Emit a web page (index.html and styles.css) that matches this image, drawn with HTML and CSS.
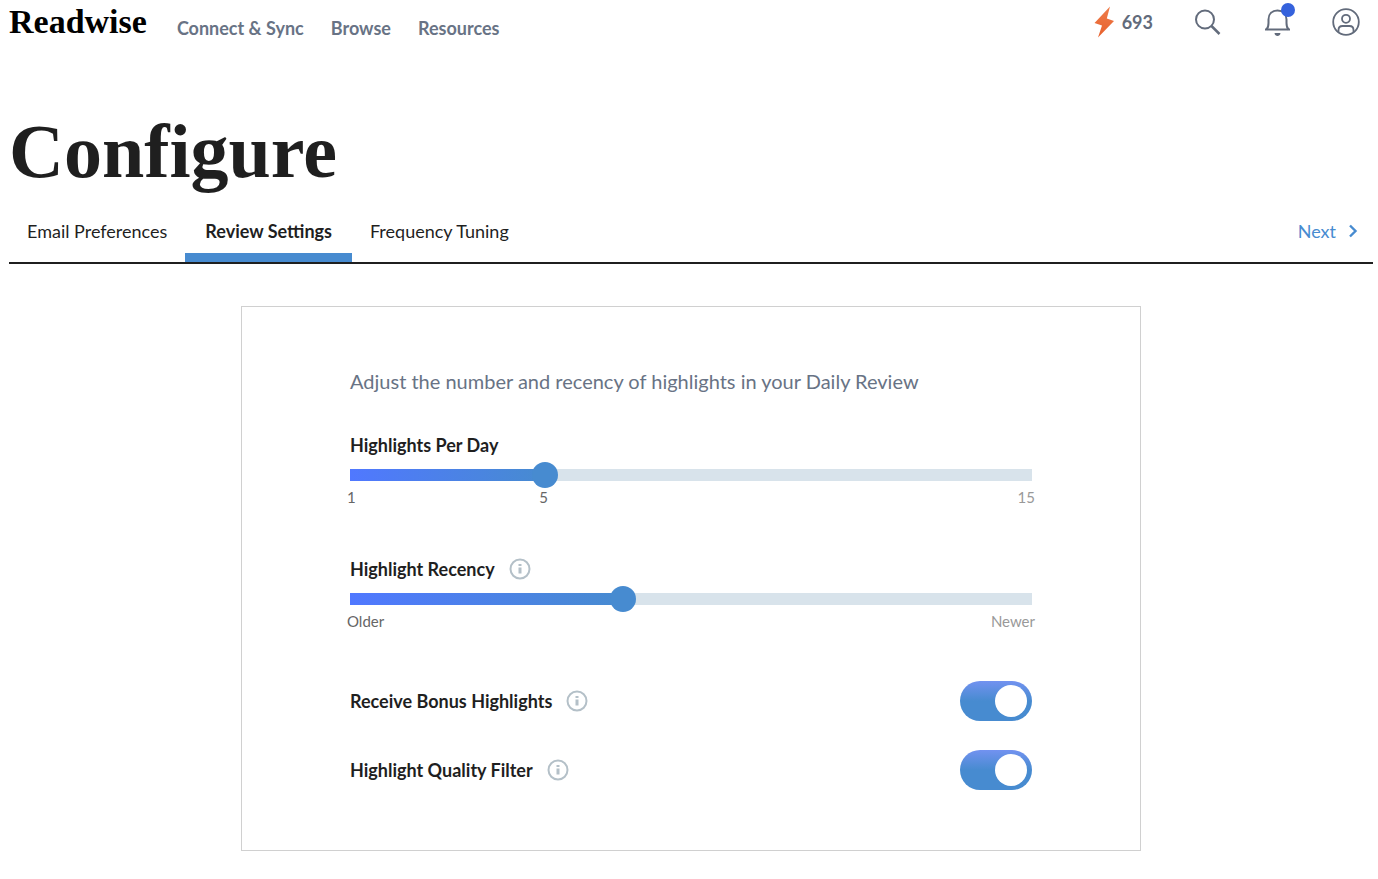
FILE: index.html
```html
<!DOCTYPE html>
<html lang="en">
<head>
    <meta charset="UTF-8">
    <meta name="viewport" content="width=device-width, initial-scale=1.0">
    <title>Readwise - Configure</title>
    <link rel="stylesheet" href="styles.css">
</head>
<body>
    <!-- Top Navigation -->
    <header class="topbar">
        <a class="logo" href="#">Readwise</a>
        <nav class="main-nav">
            <a href="#">Connect &amp; Sync</a>
            <a href="#">Browse</a>
            <a href="#">Resources</a>
        </nav>
        <div class="actions">
            <a class="streak" href="#">
                <svg width="20" height="32" viewBox="0 0 20 32">
                    <defs>
                        <linearGradient id="bolt" x1="0" y1="0" x2="0" y2="1">
                            <stop offset="0" stop-color="#ee7d4b" />
                            <stop offset="1" stop-color="#e8602c" />
                        </linearGradient>
                    </defs>
                    <path d="M16 0.500 L0.500 17 L8 19.500 L4 31.500 L20 15 L12.800 12.500 Z" fill="url(#bolt)" />
                </svg>
                <span>693</span>
            </a>
            <button class="icon-button" aria-label="Search">
                <svg width="28" height="28" viewBox="0 0 28 28" fill="none" stroke="#626b7b">
                    <circle cx="11" cy="11.500" r="9" stroke-width="2" />
                    <path d="M17.500 18 L25.500 26" stroke-width="2.500" />
                </svg>
            </button>
            <button class="icon-button" aria-label="Notifications">
                <svg width="28" height="28" viewBox="0 0 28 28" fill="none" stroke="#626b7b" stroke-width="2">
                    <path d="M2 21.500 H27" />
                    <path d="M3.500 21.500 C5.500 19.500 5.500 18 5.500 15 V11.500 C5.500 6 9 2.500 14.500 2.500 S23.500 6 23.500 11.500 V15 C23.500 18 23.500 19.500 25.500 21.500" />
                    <path d="M11.500 25 H17.500 C17.200 27.200 16 28 14.500 28 S11.800 27.200 11.500 25 Z" fill="#626b7b" stroke="none" />
                </svg>
                <span class="badge"></span>
            </button>
            <button class="icon-button" aria-label="Account">
                <svg width="28" height="28" viewBox="0 0 28 28" fill="none" stroke="#626b7b" stroke-width="1.800">
                    <circle cx="14" cy="14" r="12.800" />
                    <circle cx="14" cy="10.800" r="4" />
                    <path d="M6.500 24.200 V22 C6.500 19.300 8.200 18 10.500 18 H17.500 C19.800 18 21.500 19.300 21.500 22 V24.200" />
                </svg>
            </button>
        </div>
    </header>

    <h1>Configure</h1>

    <!-- Tabs -->
    <nav class="tabs">
        <a class="tab" href="#">Email Preferences</a>
        <a class="tab active" href="#">Review Settings</a>
        <a class="tab" href="#">Frequency Tuning</a>
        <a class="next" href="#">
            Next
            <svg width="10" height="14" viewBox="0 0 10 14" fill="none" stroke="#478bd0" stroke-width="2.400">
                <path d="M2 1.500 L7.500 7 L2 12.500" />
            </svg>
        </a>
    </nav>

    <!-- Review Settings -->
    <main class="card">
        <p class="intro">Adjust the number and recency of highlights in your Daily Review</p>

        <div class="setting">
            <div class="heading">
                <label for="perDay">Highlights Per Day</label>
            </div>
            <input class="slider" type="range" id="perDay" min="1" max="15" value="5" style="--fill: 0.2857" />
            <div class="scale">
                <span>1</span>
                <output class="current" for="perDay" style="left: 28.57%">5</output>
                <span class="end">15</span>
            </div>
        </div>

        <div class="setting">
            <div class="heading">
                <label for="recency">Highlight Recency</label>
                <svg class="info" viewBox="0 0 22 22"><circle cx="11" cy="11" r="9.500" /><path d="M11 9.500 V15.500 M11 6 V8" /></svg>
            </div>
            <input class="slider" type="range" id="recency" min="0" max="100" value="40" style="--fill: 0.4" />
            <div class="scale">
                <span>Older</span>
                <span class="end">Newer</span>
            </div>
        </div>

        <div class="toggle-row">
            <label for="bonus">Receive Bonus Highlights</label>
            <svg class="info" viewBox="0 0 22 22"><circle cx="11" cy="11" r="9.500" /><path d="M11 9.500 V15.500 M11 6 V8" /></svg>
            <input class="toggle" type="checkbox" id="bonus" checked />
        </div>

        <div class="toggle-row">
            <label for="quality">Highlight Quality Filter</label>
            <svg class="info" viewBox="0 0 22 22"><circle cx="11" cy="11" r="9.500" /><path d="M11 9.500 V15.500 M11 6 V8" /></svg>
            <input class="toggle" type="checkbox" id="quality" checked />
        </div>
    </main>

    <script>
        // Keep the filled part of each slider in step with its thumb
        document.querySelectorAll('.slider').forEach(function (slider) {
            slider.addEventListener('input', function () {
                const fill = (slider.value - slider.min) / (slider.max - slider.min);
                slider.style.setProperty('--fill', fill);
                const current = slider.parentElement.querySelector('.current');
                if (current) {
                    current.style.left = fill * 100 + '%';
                    current.textContent = slider.value;
                }
            });
        });
    </script>
</body>
</html>
```
FILE: styles.css
```css
* {
    box-sizing: border-box;
}
body {
    margin: 0;
    padding: 0 5px 24px 9px;
    font-family: Lato, "Liberation Sans", sans-serif;
    font-size: 18px;
    line-height: 24px;
    color: #1f1f1f;
    background-color: #ffffff;
}
a {
    color: inherit;
    text-decoration: none;
}
svg {
    display: block;
    flex-shrink: 0;
}
.topbar {
    display: flex;
    align-items: center;
    height: 44px;
}
.logo {
    font-family: "Liberation Serif", serif;
    font-size: 34px;
    font-weight: bold;
    color: #000000;
}
.main-nav {
    display: flex;
    gap: 27px;
    margin-left: 30px;
    padding-top: 12px;
    font-weight: bold;
    color: #687385;
}
.actions {
    display: flex;
    align-items: center;
    gap: 41px;
    margin-left: auto;
    padding-right: 13px;
}
.streak {
    display: flex;
    align-items: center;
    gap: 8px;
    font-weight: bold;
    color: #626b7b;
}
.icon-button {
    position: relative;
    padding: 0;
    border: none;
    background: none;
    cursor: pointer;
}
.badge {
    position: absolute;
    top: -5px;
    right: -4px;
    width: 14px;
    height: 14px;
    border-radius: 50%;
    background-color: #3562dc;
}
h1 {
    margin: 59px 0 0;
    font-family: "Liberation Serif", serif;
    font-size: 76px;
    line-height: 96px;
}
.tabs {
    display: flex;
    margin-top: 13px;
    border-bottom: 2px solid #1f1f1f;
}
.tab {
    padding: 7px 18px 10px;
    border-bottom: 9px solid transparent;
}
.tab.active {
    padding-left: 20px;
    padding-right: 20px;
    border-bottom-color: #478bd0;
    font-weight: bold;
}
.next {
    display: flex;
    align-items: center;
    gap: 12px;
    height: 38px;
    margin-left: auto;
    padding-right: 15px;
    color: #478bd0;
}
.card {
    max-width: 900px;
    margin: 42px auto 0;
    padding: 60px 108px;
    border: 1px solid #d0d0d0;
}
.intro {
    margin: 0 0 38px;
    font-size: 20px;
    line-height: 28px;
    color: #687385;
}
.setting {
    margin-bottom: 50px;
}
.heading, .toggle-row {
    display: flex;
    align-items: center;
    gap: 14px;
    font-weight: bold;
}
.info {
    width: 22px;
    height: 22px;
    fill: none;
    stroke: #b4c0c8;
    stroke-width: 2;
}
.info path {
    stroke-width: 3;
}
.slider {
    --track: 12px;
    display: block;
    appearance: none;
    width: calc(100% + 26px);
    height: 26px;
    margin: 5px -13px 0;
    background:
        linear-gradient(to right, #5078ff, #478bd0) 13px center / calc((100% - 26px) * var(--fill)) var(--track) no-repeat,
        linear-gradient(#d8e3eb, #d8e3eb) 13px center / calc(100% - 26px) var(--track) no-repeat;
    cursor: pointer;
}
.slider::-webkit-slider-thumb {
    appearance: none;
    width: 26px;
    height: 26px;
    border-radius: 50%;
    background-color: #478bd0;
}
.scale {
    position: relative;
    display: flex;
    justify-content: space-between;
    margin: -1px -3px 0;
    font-size: 15px;
    line-height: 20px;
    color: #666666;
}
.scale .end {
    color: #999999;
}
.current {
    position: absolute;
    transform: translateX(-50%);
}
.toggle-row {
    height: 40px;
}
.toggle-row + .toggle-row {
    margin-top: 29px;
}
.toggle {
    appearance: none;
    width: 72px;
    height: 40px;
    margin: 0 0 0 auto;
    padding: 4px 5px;
    border-radius: 20px;
    background: linear-gradient(to bottom, #7292f0, #478bd0 50%);
    cursor: pointer;
}
.toggle::before {
    content: "";
    display: block;
    width: 32px;
    height: 32px;
    border-radius: 50%;
    background-color: #ffffff;
}
.toggle:checked::before {
    margin-left: auto;
}
.toggle:not(:checked) {
    background: #d8e3eb;
}
```
